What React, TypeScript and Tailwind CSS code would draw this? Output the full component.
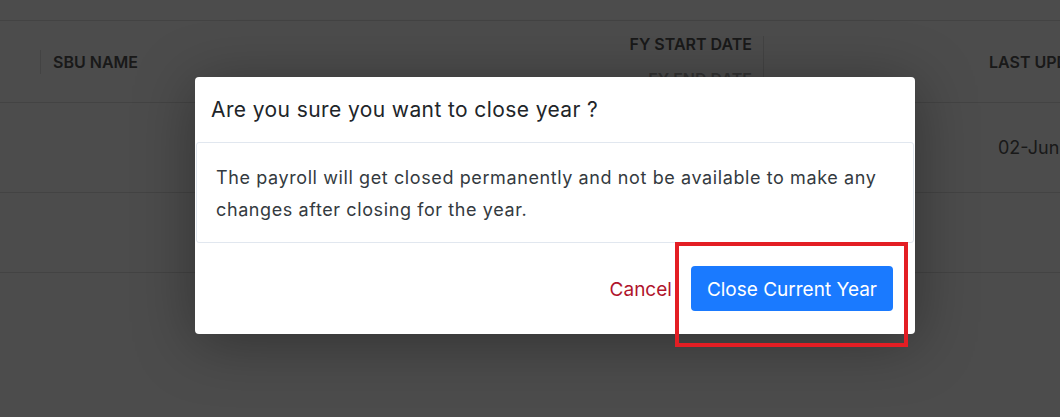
export default function App() {
  return (
    <div
      className="relative h-[417px] w-[1060px] overflow-hidden bg-white"
      style={{ fontFamily: "Inter, 'Liberation Sans', sans-serif" }}
    >
      {/* page underneath */}
      <div className="h-[21px] border-b border-[#e2e2e2]" />
      <div className="flex h-[82px] border-b border-[#e2e2e2] text-[16px] font-semibold text-[#555] whitespace-nowrap">
        <div className="w-[40px] shrink-0" />
        <div className="flex w-[460px] shrink-0 items-center">
          <span className="h-[24px] border-l border-[#e2e2e2]" />
          <span className="pl-[12px]">SBU NAME</span>
        </div>
        <div className="flex w-[263px] shrink-0 flex-col items-end justify-center gap-[11px] pr-[11px]">
          <span>FY START DATE</span>
          <span className="text-[#aaa]">FY END DATE</span>
        </div>
        <div className="mt-[15px] shrink-0 border-l border-[#e2e2e2]" />
        <div className="flex shrink-0 items-center pl-[225px]">LAST UPDATED</div>
      </div>
      <div className="flex h-[90px] items-center border-b border-[#e2e2e2] text-[18px] text-[#555] whitespace-nowrap">
        <span className="shrink-0 pl-[998px]">02-Jun-2023</span>
      </div>
      <div className="h-[80px] border-b border-[#e2e2e2]" />

      {/* backdrop */}
      <div className="absolute inset-0 bg-black/70" />

      {/* modal */}
      <div className="absolute left-[195px] top-[77px] w-[720px] rounded-[4px] bg-white shadow-[0_8px_60px_rgba(0,0,0,0.35)]">
        <div className="flex h-[65px] items-center px-[16px] text-[21px] tracking-[0.4px] text-[#212529]">
          Are you sure you want to close year ?
        </div>
        <div className="mx-px rounded-[3px] border border-[#e1e7ef] px-[19px] pt-[19px] pb-[16px] text-[18px] leading-[32px] tracking-[0.6px] text-[#343a40]">
          The payroll will get closed permanently and not be available to make any
          changes after closing for the year.
        </div>
        <div className="flex items-center justify-end gap-[19px] pt-[23px] pr-[22px] pb-[23px]">
          <button className="pt-[3px] text-[19px] text-[#b0152c]">Cancel</button>
          <button className="h-[45px] rounded-[4px] bg-[#1a7aff] px-[16px] pt-[3px] text-[19px] text-white">
            Close Current Year
          </button>
        </div>
      </div>

      {/* annotation */}
      <div className="absolute left-[675px] top-[242px] h-[105px] w-[233px] border-[4px] border-[#e31e24]" />
    </div>
  );
}
